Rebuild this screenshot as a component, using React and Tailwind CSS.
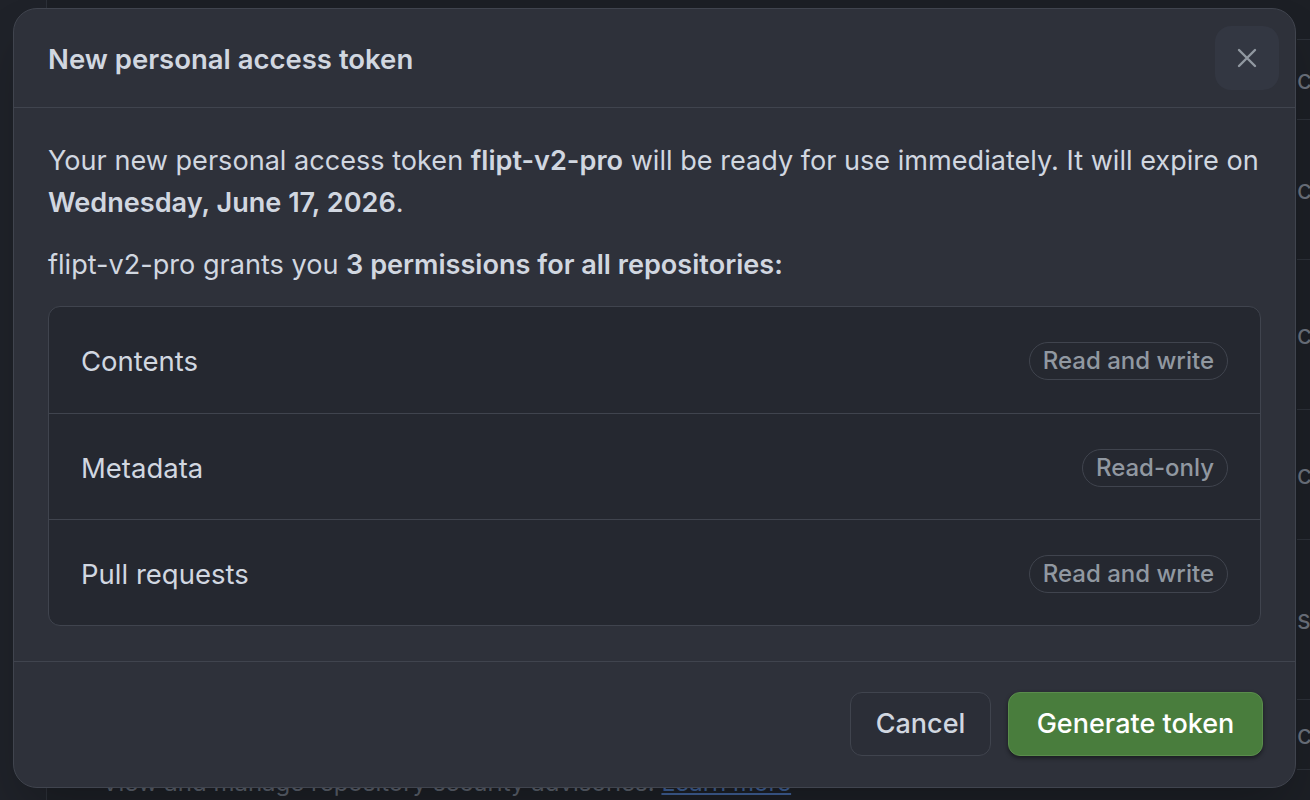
import React from "react";

const permissions = [
  { name: "Contents", access: "Read and write" },
  { name: "Metadata", access: "Read-only" },
  { name: "Pull requests", access: "Read and write" },
];

// page behind the modal, only slivers of it show
function Backdrop() {
  const rows = [
    { h: 40, text: "" },
    { h: 80, text: "co" },
    { h: 140, text: "co" },
    { h: 150, text: "co" },
    { h: 130, text: "co" },
    { h: 160, text: "s:" },
    { h: 70, text: "co" },
  ];
  return (
    <div className="flex h-[800px] w-full bg-[#1c1f25]">
      <div className="w-[47px] shrink-0 border-r border-[#2c3038] bg-[#1f2229]" />
      <div className="flex flex-1 flex-col justify-end pb-[1px] pl-[55px]">
        <p className="text-[24px] leading-[32px] text-[#5a606b]">
          View and manage repository security advisories.{" "}
          <span className="text-[#3f5f95] underline">Learn more</span>
        </p>
      </div>
      <div className="flex w-[13px] shrink-0 flex-col overflow-hidden">
        {rows.map((r, i) => (
          <div
            key={i}
            className="flex items-center border-b border-[#2c3038] text-[26px] text-[#6a707b]"
            style={{ height: r.h }}
          >
            <span className="whitespace-nowrap">{r.text}</span>
          </div>
        ))}
      </div>
    </div>
  );
}

function CloseIcon() {
  return (
    <svg width="20" height="20" viewBox="0 0 20 20" fill="none" stroke="#9198a1" strokeWidth="2.4" strokeLinecap="round">
      <path d="M2 2 18 18M18 2 2 18" />
    </svg>
  );
}

export default function App() {
  return (
    <div className="relative h-[800px] w-[1310px] overflow-hidden font-['Inter',sans-serif]">
      <Backdrop />

      <div className="absolute left-[13px] top-[8px] flex h-[780px] w-[1283px] flex-col rounded-[24px] border border-[#40444e] bg-[#2e313a] shadow-2xl">
        <div className="flex h-[99px] shrink-0 items-center justify-between border-b border-[#40444e] pl-[34px] pr-[16px]">
          <h1 className="pt-[3px] text-[27.5px] font-semibold text-[#d1d7e0]">New personal access token</h1>
          <button className="flex h-[64px] w-[64px] items-center justify-center rounded-[16px] bg-[#333742]">
            <CloseIcon />
          </button>
        </div>

        <div className="flex-1 px-[34px] pt-[32px] text-[27.1px] leading-[42px] text-[#d1d7e0]">
          <p className="mb-[20px]">
            Your new personal access token <strong className="font-semibold">flipt-v2-pro</strong> will be ready for
            use immediately. It will expire on <strong className="font-semibold">Wednesday, June 17, 2026</strong>.
          </p>
          <p className="mb-[20px]">
            flipt-v2-pro grants you <strong className="font-semibold">3 permissions for all repositories:</strong>
          </p>
          <div className="overflow-hidden rounded-[12px] border border-[#40444e] bg-[#252830]">
            {permissions.map((p, i) => (
              <div
                key={p.name}
                className={
                  "flex h-[106px] items-center justify-between px-[32px] pt-[2px] text-[27.5px] " +
                  (i > 0 ? "border-t border-[#40444e]" : "")
                }
              >
                <span>{p.name}</span>
                <span className="rounded-full border border-[#40444e] px-[13px] text-[24px] font-medium leading-[36px] text-[#9198a1]">
                  {p.access}
                </span>
              </div>
            ))}
          </div>
        </div>

        <div className="flex h-[126px] shrink-0 items-start justify-end gap-[17px] border-t border-[#40444e] pr-[32px] pt-[30px]">
          <button className="h-[64px] w-[141px] rounded-[12px] border border-[#40444e] bg-[#2b2e37] text-[27px] font-medium text-[#d1d7e0]">
            Cancel
          </button>
          <button className="h-[64px] w-[255px] rounded-[12px] border border-[#5a8d4c] bg-[#497d3d] text-[27px] font-medium text-white shadow-[0_2px_4px_rgba(0,0,0,0.45)]">
            Generate token
          </button>
        </div>
      </div>
    </div>
  );
}
